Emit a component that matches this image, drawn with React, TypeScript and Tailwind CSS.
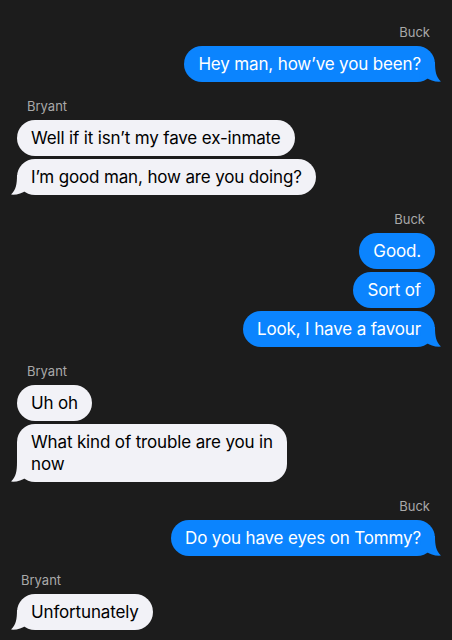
import React from "react";

type Group = { from: "me" | "them"; name: string; nameIndent: number; msgs: string[] };

const groups: Group[] = [
  { from: "me", name: "Buck", nameIndent: 22, msgs: ["Hey man, how’ve you been?"] },
  { from: "them", name: "Bryant", nameIndent: 27, msgs: ["Well if it isn’t my fave ex-inmate", "I’m good man, how are you doing?"] },
  { from: "me", name: "Buck", nameIndent: 27, msgs: ["Good.", "Sort of", "Look, I have a favour"] },
  { from: "them", name: "Bryant", nameIndent: 27, msgs: ["Uh oh", "What kind of trouble are you in\nnow"] },
  { from: "me", name: "Buck", nameIndent: 22, msgs: ["Do you have eyes on Tommy?"] },
  { from: "them", name: "Bryant", nameIndent: 21, msgs: ["Unfortunately"] },
];

function TailRight() {
  return (
    <svg className="absolute -right-[6px] bottom-0" width="22" height="20" viewBox="0 0 22 20">
      <path d="M2 0 L16 0 C16 9 17 15 22 19.6 C16 20 11 18.5 7 15.5 C5 17 3 18 0 18 Z" fill="#0b84fe" />
    </svg>
  );
}

function TailLeft() {
  return (
    <svg className="absolute -left-[6px] bottom-0" width="22" height="20" viewBox="0 0 22 20">
      <path d="M20 0 L6 0 C6 9 5 15 0 19.6 C6 20 11 18.5 15 15.5 C17 17 19 18 22 18 Z" fill="#f2f2f7" />
    </svg>
  );
}

export default function App() {
  return (
    <div
      className="w-[452px] h-[640px] overflow-hidden bg-[#1c1c1c] pt-[24px] flex flex-col gap-[16px]"
      style={{ fontFamily: "Inter, 'Noto Sans', sans-serif" }}
    >
      {groups.map((g, gi) => (
        <div key={gi} className={g.from === "me" ? "flex flex-col items-end" : "flex flex-col items-start"}>
          <div
            className="text-[13px] leading-[16px] text-[#a9a9a9] mb-[6px]"
            style={g.from === "me" ? { marginRight: g.nameIndent } : { marginLeft: g.nameIndent }}
          >
            {g.name}
          </div>
          <div className={g.from === "me" ? "flex flex-col items-end gap-[3px] pr-[17px]" : "flex flex-col items-start gap-[3px] pl-[17px]"}>
            {g.msgs.map((m, mi) => {
              const last = mi === g.msgs.length - 1;
              return (
                <div
                  key={mi}
                  className={
                    g.from === "me"
                      ? "relative whitespace-pre-line rounded-[18px] bg-[#0b84fe] text-white px-[14px] py-[7px] text-[17px] leading-[22px] tracking-[-0.15px]"
                      : "relative whitespace-pre-line rounded-[18px] bg-[#f2f2f7] text-black px-[14px] py-[7px] text-[17px] leading-[22px] tracking-[-0.15px]"
                  }
                >
                  {last && (g.from === "me" ? <TailRight /> : <TailLeft />)}
                  <span className="relative">{m}</span>
                </div>
              );
            })}
          </div>
        </div>
      ))}
    </div>
  );
}
